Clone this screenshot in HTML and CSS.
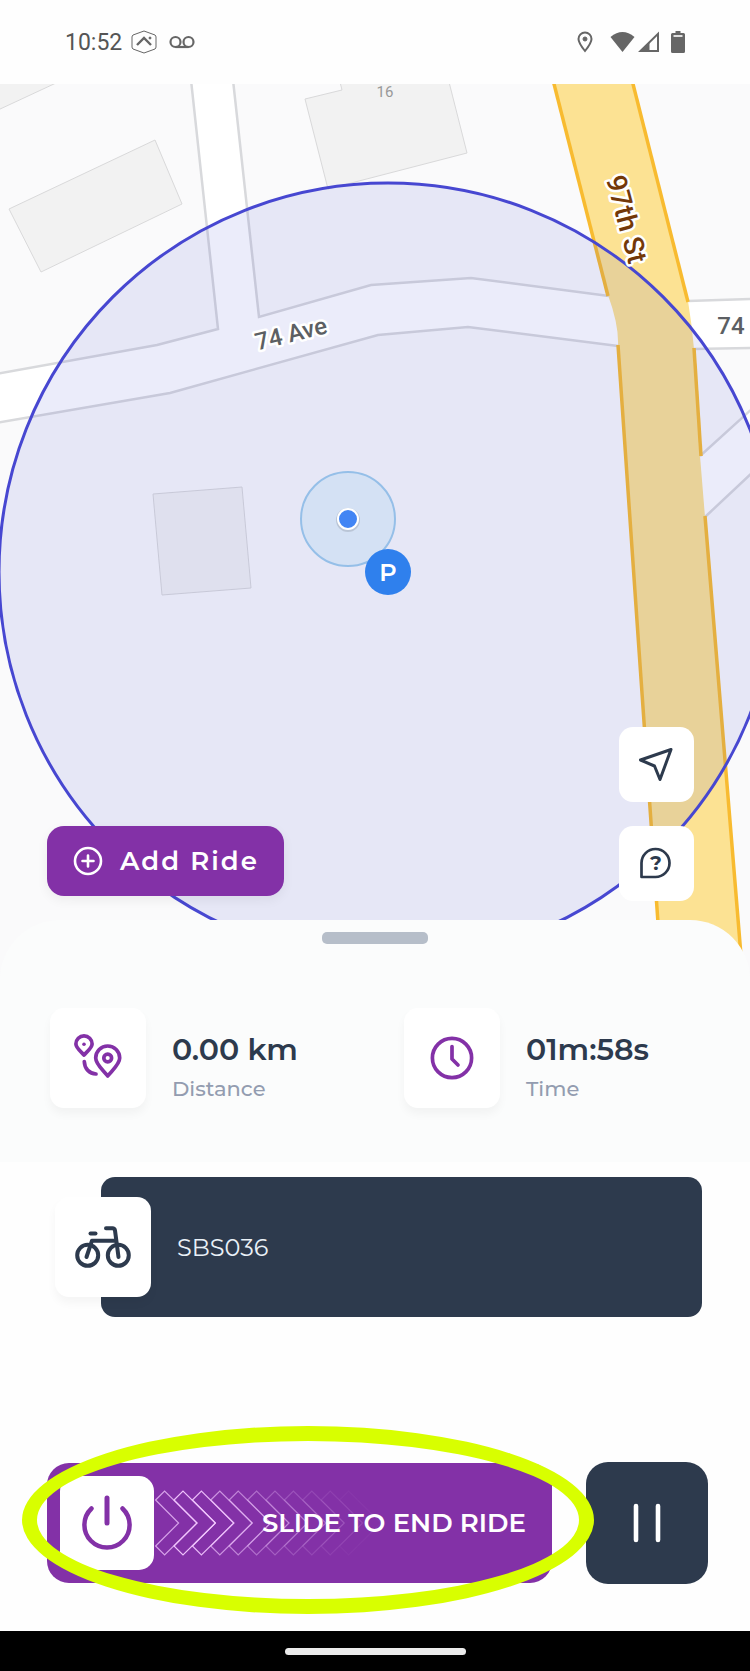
FILE: index.html
```html
<!DOCTYPE html>
<html lang="en">
    <head>
        <meta charset="utf-8" />
        <meta name="viewport" content="width=device-width, initial-scale=1" />
        <title>Current Ride</title>
        <link rel="stylesheet" href="styles.css">
    </head>
    <body>
        <header class="status">
            <span class="clock">10:52</span>
            <svg class="status-app" width="26" height="24" viewBox="0 0 26 24" fill="none" stroke="#666" aria-hidden="true">
                <path d="M13 1 L24 5 Q25 6 25 7 V17 Q25 18 24 19 L13 23 L2 19 Q1 18 1 17 V7 Q1 6 2 5 Z" />
                <path d="M6 15 L13 8 L20 15" stroke-width="2.4" />
                <circle cx="19" cy="8" r="1" fill="#666" />
            </svg>
            <svg class="status-mail" width="26" height="14" viewBox="0 0 26 14" fill="none" stroke="#666" stroke-width="2.2" aria-hidden="true">
                <circle cx="6.5" cy="7" r="5" />
                <circle cx="19.5" cy="7" r="5" />
                <path d="M6.5 12 H19.5" />
            </svg>
            <div class="status-right">
                <svg class="status-pin" width="16" height="22" viewBox="0 0 16 22" fill="none" stroke="#666" stroke-width="2" aria-hidden="true">
                    <path d="M8 20 C4 15 1.500 11.500 1.500 8 A6.500 6.500 0 0 1 14.500 8 C14.500 11.500 12 15 8 20 Z" />
                    <circle cx="8" cy="8" r="2" fill="#666" stroke-width="1" />
                </svg>
                <svg width="25" height="22" viewBox="0 0 25 22" fill="#666" aria-hidden="true">
                    <path d="M0.500 6 Q12.500 -4 24.500 6 L12.500 21 Z" />
                </svg>
                <svg width="22" height="22" viewBox="0 0 22 22" aria-hidden="true">
                    <path d="M2.500 20 L20 2.800 V20 Z" fill="none" stroke="#666" stroke-width="2" />
                    <path d="M1 21 L11.500 10.500 V21 Z" fill="#666" />
                </svg>
                <svg class="status-battery" width="14" height="22" viewBox="0 0 14 22" fill="#666" aria-hidden="true">
                    <path d="M4.500 0 H9.500 V2 H12.500 Q14 2 14 3.500 V20.500 Q14 22 12.500 22 H1.500 Q0 22 0 20.500 V3.500 Q0 2 1.500 2 H4.500 Z" />
                    <path d="M2.500 5 H11.500" stroke="#fff" stroke-width="1.600" />
                </svg>
            </div>
        </header>

        <main>
            <section class="map">
                <svg class="map-canvas" viewBox="0 84 750 896" role="img" aria-label="Map of 74 Ave and 97th St">
                    <rect y="84" width="750" height="896" fill="#fafafb" />

                    <!-- buildings -->
                    <g fill="#f2f2f2" stroke="#d9d9da">
                        <path d="M-2 83 H56 L-2 110 Z" />
                        <path d="M9 209 L155 140 L182 204 L41 272 Z" />
                        <path d="M305 99 L342 90 L340 82 H449 L467 153 L328 189 Z" />
                        <path d="M153 494 L242 487 L251 588 L162 595 Z" />
                    </g>

                    <!-- side roads -->
                    <path fill="#fff" d="M-4 374 L157 345 L218 329 L191 80 H233 L259 317 L371 285 L471 278 L612 296 L620 346 L468 327 L378 335 L170 393 L-4 423 Z" />
                    <path fill="#fff" d="M686 302 L754 299 V347 L690 349 Z" />
                    <path fill="#fff" d="M698 456 L754 405 V471 L703 518 Z" />
                    <g fill="none" stroke="#d8d9dc" stroke-width="2.500">
                        <path d="M-4 374 L157 345 L218 329 L191 80" />
                        <path d="M233 80 L259 317 L371 285 L471 278 L609 296" />
                        <path d="M-4 423 L170 393 L378 335 L468 327 L618 346" />
                        <path d="M688 301 L754 299 M693 349 L754 348" />
                        <path d="M700 456 L754 407 M705 517 L754 471" />
                    </g>

                    <!-- 97th St -->
                    <path fill="#fce293" d="M553 80 L608 295 Q619 325 618 346 L639 650 L662 980 H743 L716 650 L705 517 L700 456 L694 349 Q692 325 688 301 L632 80 Z" />
                    <g fill="none" stroke="#f8bb30" stroke-width="3.500">
                        <path d="M553 80 L608 296" />
                        <path d="M618 345 L639 650 L662 980" />
                        <path d="M632 80 L688 302" />
                        <path d="M694 348 L701 456" />
                        <path d="M705 516 L716 650 L743 980" />
                    </g>

                    <circle cx="388" cy="572" r="389" fill="rgba(55, 65, 205, 0.1)" stroke="#4747d1" stroke-width="3" />

                    <text class="house-no" x="385" y="97">16</text>
                    <g class="map-text">
                        <text class="road" x="291" y="342" transform="rotate(-14 291 334)">74 Ave</text>
                        <text class="road" x="731" y="334">74</text>
                        <text class="street" x="627" y="229" transform="rotate(75 627 219)">97th St</text>
                    </g>

                    <!-- current position and parking spot -->
                    <circle cx="348" cy="519" r="47" fill="rgba(174, 212, 238, 0.32)" stroke="#95bfe8" stroke-width="2" />
                    <circle cx="348" cy="520" r="12" fill="rgba(0, 0, 0, 0.12)" />
                    <circle cx="348" cy="519" r="10" fill="#4285f4" stroke="#fff" stroke-width="2" />
                    <circle cx="388" cy="572" r="23" fill="#2f80ed" />
                    <text class="parking" x="388" y="581">P</text>
                </svg>

                <div class="map-actions">
                    <button class="square-btn locate" type="button" aria-label="My location">
                        <svg width="36" height="36" viewBox="0 0 36 36" fill="none" stroke="#2d3a4d" stroke-width="3" stroke-linejoin="round">
                            <path d="M32 2.500 L1.500 13 L15.500 19 L21 32.500 Z" />
                        </svg>
                    </button>
                    <button class="add-ride" type="button">
                        <svg width="30" height="30" viewBox="0 0 30 30" fill="none" stroke="#fff" stroke-width="2.600" stroke-linecap="round" aria-hidden="true">
                            <circle cx="15" cy="15" r="13" />
                            <path d="M9.500 15 H20.500 M15 9.500 V20.500" />
                        </svg>
                        Add Ride
                    </button>
                    <button class="square-btn help" type="button" aria-label="Help">
                        <svg width="36" height="36" viewBox="0 0 36 36">
                            <path d="M2.500 31 V17 A14 14 0 1 1 16.500 31 Z" fill="none" stroke="#2d3a4d" stroke-width="2.700" stroke-linejoin="round" />
                            <text class="help-mark" x="17" y="24">?</text>
                        </svg>
                    </button>
                </div>
            </section>

            <section class="sheet">
                <div class="handle"></div>
                <div class="stats">
                    <div class="stat">
                        <div class="tile">
                            <svg width="48" height="48" viewBox="0 0 48 48" fill="none" stroke="#8331a7" stroke-width="3.700" stroke-linecap="round" stroke-linejoin="round" aria-hidden="true">
                                <path d="M10 21 C8 18.500 1.900 14 1.900 10 A8.100 8.100 0 0 1 18.100 10 C18.100 14 12 18.500 10 21 Z" />
                                <circle cx="10" cy="10.300" r="1.800" fill="#8331a7" stroke="none" />
                                <path d="M33.700 42 C30 37 21.700 30.500 21.700 24 A12 12 0 0 1 45.700 24 C45.700 30.500 37.500 37 33.700 42 Z" />
                                <circle cx="33.700" cy="24" r="3.900" />
                                <path d="M10.300 27.500 C10.500 35 15.500 39.500 22 40" />
                            </svg>
                        </div>
                        <div>
                            <p class="value">0.00 km</p>
                            <p class="label">Distance</p>
                        </div>
                    </div>
                    <div class="stat">
                        <div class="tile">
                            <svg width="44" height="44" viewBox="0 0 44 44" fill="none" stroke="#8331a7" stroke-width="3.700" stroke-linecap="round" stroke-linejoin="round" aria-hidden="true">
                                <circle cx="22" cy="22" r="19.600" />
                                <path d="M22 10.500 V23 L28 29" />
                            </svg>
                        </div>
                        <div>
                            <p class="value">01m:58s</p>
                            <p class="label">Time</p>
                        </div>
                    </div>
                </div>
            </section>

            <section class="bike">
                <div class="tile">
                    <svg width="56" height="42" viewBox="0 0 56 42" fill="none" stroke="#2d3a4d" stroke-width="4" stroke-linecap="round" stroke-linejoin="round" aria-hidden="true">
                        <circle cx="12.700" cy="29.300" r="10.500" />
                        <circle cx="43.300" cy="29.300" r="10.500" />
                        <path d="M11.500 31 L17 14.700 H41" />
                        <path d="M31 2.300 H37.500 Q39.500 2.300 40 4.500 L43.500 31" />
                        <path d="M15.500 7.500 H20.500" />
                    </svg>
                </div>
                <span>SBS036</span>
            </section>

            <section class="controls">
                <div class="slide-wrap">
                    <button class="slide" type="button">
                        <span class="thumb">
                            <svg width="52" height="58" viewBox="0 0 52 58" fill="none" stroke="#8331a7" stroke-width="4.500" stroke-linecap="round" aria-hidden="true">
                                <path d="M10.500 14.500 A22.600 22.600 0 1 0 41.500 14.500" />
                                <path d="M26 4 V29" stroke-width="5" />
                            </svg>
                        </span>
                        <svg class="chevrons" width="240" height="66" viewBox="0 0 240 66" fill="none" stroke="#f3c8ff" stroke-width="1.200" aria-hidden="true">
                            <defs>
                                <path id="chevron" d="M0.600 10 L9.600 1 L42 33 L9.600 65 L0.600 56 L23.600 33 Z" />
                            </defs>
                            <use href="#chevron" x="1" opacity="0.75" />
                            <use href="#chevron" x="19.400" opacity="0.95" />
                            <use href="#chevron" x="37.800" opacity="0.9" />
                            <use href="#chevron" x="56.200" opacity="0.65" />
                            <use href="#chevron" x="74.600" opacity="0.55" />
                            <use href="#chevron" x="93" opacity="0.4" />
                            <use href="#chevron" x="111.400" opacity="0.3" />
                            <use href="#chevron" x="129.800" opacity="0.22" />
                            <use href="#chevron" x="148.200" opacity="0.15" />
                            <use href="#chevron" x="166.600" opacity="0.1" />
                            <use href="#chevron" x="185" opacity="0.04" />
                        </svg>
                        <span class="slide-text">SLIDE TO END RIDE</span>
                    </button>
                    <div class="highlight"></div>
                </div>
                <button class="pause" type="button" aria-label="Pause ride">
                    <svg width="28" height="40" viewBox="0 0 28 40" stroke="#fff" stroke-width="4.600" stroke-linecap="round">
                        <path d="M3 3 V37 M25 3 V37" />
                    </svg>
                </button>
            </section>
        </main>

        <footer class="nav-bar">
            <div class="home"></div>
        </footer>
    </body>
</html>
```
FILE: styles.css
```css
* {
    box-sizing: border-box;
}

body {
    display: flex;
    flex-direction: column;
    min-height: 100vh;
    margin: 0;
    background: #fefefe;
    color: #2d3a4d;
    font-family: Montserrat, Inter, sans-serif;
}

main {
    flex: 1;
}

button {
    padding: 0;
    border: 0;
    font-family: inherit;
    cursor: pointer;
}

svg {
    display: block;
    flex: none;
}

p {
    margin: 0;
}

/* Status bar */
.status {
    display: flex;
    align-items: center;
    height: 84px;
    padding: 0 65px;
    color: #555;
    font-family: Roboto, sans-serif;
}

.clock {
    font-size: 23px;
}

.status-app {
    margin-left: 9px;
}

.status-mail {
    margin-left: 12px;
}

.status-right {
    display: flex;
    align-items: center;
    gap: 3px;
    margin-left: auto;
}

.status-pin {
    margin-right: 14px;
}

.status-battery {
    margin-left: 8px;
}

/* Map */
.map {
    position: relative;
}

.map-canvas {
    width: 100%;
    height: auto;
}

.map-text {
    paint-order: stroke;
    stroke: #fff;
    stroke-width: 5px;
    stroke-linejoin: round;
}

.house-no,
.road,
.street {
    font-family: Roboto, sans-serif;
    text-anchor: middle;
}

.house-no {
    font-size: 15px;
    fill: #999;
}

.road {
    font-size: 24px;
    font-weight: 500;
    fill: #5c5f63;
}

.street {
    font-size: 28px;
    font-weight: 500;
    fill: #733808;
}

.parking {
    font-size: 24px;
    font-weight: 600;
    text-anchor: middle;
    fill: #fff;
}

.map-actions {
    position: absolute;
    right: 56px;
    bottom: 79px;
    left: 47px;
    display: grid;
    grid-template-columns: auto auto;
    justify-content: space-between;
    align-items: start;
    gap: 24px;
}

.square-btn {
    display: flex;
    align-items: center;
    justify-content: center;
    width: 75px;
    height: 75px;
    border-radius: 14px;
    background: #fff;
}

.locate {
    grid-column: 2;
}

.help-mark {
    font-size: 20px;
    font-weight: 700;
    text-anchor: middle;
    fill: #2d3a4d;
}

.add-ride {
    display: flex;
    align-items: center;
    gap: 17px;
    height: 70px;
    padding: 0 25px 0 26px;
    border-radius: 17px;
    background: #8331a7;
    box-shadow: 0 4px 12px rgba(0, 0, 0, 0.06);
    color: #fff;
    font-size: 26px;
    font-weight: 600;
    letter-spacing: 2px;
}

/* Ride info */
.sheet {
    position: relative;
    margin-top: -60px;
    padding: 12px 50px 54px;
    border-radius: 60px 60px 0 0;
    background: #fbfcfc;
}

.handle {
    width: 106px;
    height: 12px;
    margin: 0 auto 64px;
    border-radius: 5px;
    background: #b6bec9;
}

.stats {
    display: grid;
    grid-template-columns: 1fr 1fr;
    gap: 58px;
}

.stat {
    display: flex;
    align-items: flex-end;
    gap: 26px;
}

.tile {
    display: flex;
    flex: none;
    align-items: center;
    justify-content: center;
    width: 96px;
    height: 100px;
    border-radius: 14px;
    background: #fff;
    box-shadow: 0 6px 10px rgba(0, 0, 0, 0.04);
}

.value {
    font-size: 30px;
    font-weight: 600;
    line-height: 40px;
}

.label {
    color: #939cb0;
    font-size: 21px;
    font-weight: 500;
    line-height: 38px;
}

.bike {
    display: flex;
    align-items: center;
    gap: 26px;
    height: 140px;
    margin: 15px 48px 145px 101px;
    border-radius: 14px;
    background: #2d3a4d;
    color: #e9f0f7;
    font-size: 24px;
}

.bike .tile {
    margin-left: -46px;
}

/* End / pause */
.controls {
    display: flex;
    align-items: center;
    gap: 34px;
    padding: 0 42px 47px 47px;
}

.slide-wrap {
    position: relative;
    z-index: 1;
    flex: 1;
}

.slide {
    display: flex;
    align-items: center;
    width: 100%;
    height: 120px;
    padding: 0 26px 0 13px;
    border-radius: 22px;
    background: #8331a7;
    color: #fff;
}

.thumb {
    display: flex;
    flex: none;
    align-items: center;
    justify-content: center;
    width: 94px;
    height: 94px;
    border-radius: 15px;
    background: #fff;
}

/* the arrows run on under the text */
.chevrons {
    margin-right: -240px;
}

.slide-text {
    position: relative;
    margin-left: auto;
    font-size: 26px;
    font-weight: 600;
}

.highlight {
    position: absolute;
    top: -37px;
    right: -42px;
    bottom: -31px;
    left: -25px;
    border: 15px solid #d8ff00;
    border-radius: 50%;
    pointer-events: none;
}

.pause {
    display: flex;
    align-items: center;
    justify-content: center;
    width: 122px;
    height: 122px;
    border-radius: 22px;
    background: #2d3a4d;
}

/* System navigation */
.nav-bar {
    display: flex;
    align-items: center;
    justify-content: center;
    height: 40px;
    background: #000;
}

.home {
    width: 181px;
    height: 7px;
    border-radius: 4px;
    background: #ebebeb;
}
```
